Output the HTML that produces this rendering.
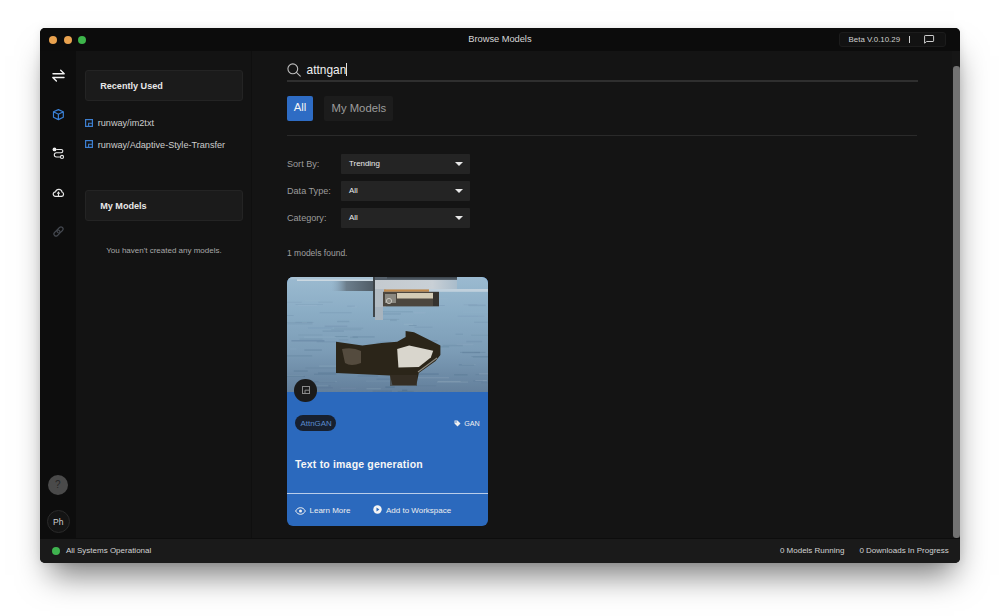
<!DOCTYPE html>
<html><head><meta charset="utf-8">
<style>
*{margin:0;padding:0;box-sizing:border-box}
html,body{width:1000px;height:616px;overflow:hidden;background:#fff;font-family:"Liberation Sans",sans-serif}
.a{position:absolute}
#win{position:absolute;left:40px;top:28px;width:920px;height:535px;border-radius:5px;background:#141414;overflow:hidden;
 box-shadow:1.5px 20px 30px -8px rgba(0,0,0,0.52),0 0 8px rgba(0,0,0,0.08)}
#title{left:0;top:0;width:920px;height:23px;background:#0c0c0c}
.dot{position:absolute;width:8.3px;height:8.3px;border-radius:50%;top:7.8px}
#side{left:0;top:23px;width:36px;height:487px;background:#0d0d0d}
#panel{left:36px;top:23px;width:176px;height:487px;background:#131313}
#main{left:212px;top:23px;width:708px;height:487px;background:#141414}
#foot{left:0;top:510px;width:920px;height:25px;background:#1a1a1a}
.t{position:absolute;white-space:nowrap;line-height:1}
.box{position:absolute;background:#1b1b1b;border:1px solid #242424;border-radius:3px}
.dd{position:absolute;left:89px;width:129px;height:19.8px;background:#242424;border-radius:1px}
.dd .arr{position:absolute;right:7px;top:7.5px;width:0;height:0;border-left:4.1px solid transparent;border-right:4.1px solid transparent;border-top:4.4px solid #e8e8e8}
.lbl{color:#9c9c9c;font-size:9.1px}
</style></head><body>
<div id="win">
  <div class="a" id="title">
    <div class="dot" style="left:9.2px;background:#e9a24f"></div>
    <div class="dot" style="left:23.5px;background:#e9a24f"></div>
    <div class="dot" style="left:38px;background:#3db54b"></div>
    <div class="t" style="left:428.3px;top:7.1px;font-size:9.35px;letter-spacing:-0.05px;color:#d6d6d6">Browse Models</div>
    <div class="a" style="left:799px;top:4px;width:107px;height:15px;background:#121212;border-radius:3px;border:1px solid #1c1c1c"></div>
    <div class="t" style="left:808.6px;top:7.6px;font-size:7.9px;color:#cfcfcf">Beta V.0.10.29</div>
    <div class="a" style="left:869px;top:8px;width:1px;height:7px;background:#cfcfcf"></div>
    <svg class="a" style="left:883px;top:6px" width="12" height="10" viewBox="0 0 12 10"><path d="M2.2 1.5h7.8q0.6 0 0.6 0.6v4.8q0 0.6-0.6 0.6h-6.4l-2 1.7v-7.1q0-0.6 0.6-0.6z" fill="none" stroke="#cdcdcd" stroke-width="1" stroke-linejoin="round"/></svg>
  </div>
  <div class="a" id="side">
    <svg class="a" style="left:12px;top:18px" width="13" height="13" viewBox="0 0 13 13"><path d="M1 4.7h11.2L8.7 1.3M12 8.5H0.8l3.6 3.4" fill="none" stroke="#f2f2f2" stroke-width="1.4" stroke-linecap="round" stroke-linejoin="round"/></svg>
    <svg class="a" style="left:12px;top:57px" width="13" height="13" viewBox="0 0 13 13"><path d="M6.4 1.6L11.3 3.8V9.2L6.4 11.6L1.5 9.2V3.8Z M1.5 3.8L6.4 6.2L11.3 3.8 M6.4 6.2V11.6" fill="none" stroke="#3a80d6" stroke-width="1.2" stroke-linejoin="round"/></svg>
    <svg class="a" style="left:12px;top:96px" width="13" height="13" viewBox="0 0 13 13"><circle cx="2.5" cy="2.4" r="1.9" fill="#f0f0f0"/><circle cx="10" cy="9.96" r="1.55" fill="none" stroke="#e8e8e8" stroke-width="1.1"/><path d="M4.2 2.5H9.2a1.62 1.62 0 0 1 0 3.24H4.4a2.11 2.11 0 0 0 0 4.22H8.4" fill="none" stroke="#e8e8e8" stroke-width="1.1"/></svg>
    <svg class="a" style="left:12px;top:135px" width="13" height="13" viewBox="0 0 13 13"><path d="M3.3 10.3H9.4A2.1 2.1 0 0 0 10.1 6.2A3.4 3.4 0 0 0 3.5 5.9A2.2 2.2 0 0 0 3.3 10.3Z" fill="none" stroke="#e6e6e6" stroke-width="1.2" stroke-linejoin="round"/><path d="M6.45 5.3L8.1 7.7H4.8Z" fill="#f5f5f5"/><path d="M6.45 7.5V10.2" stroke="#f5f5f5" stroke-width="1"/></svg>
    <svg class="a" style="left:12px;top:174px" width="13" height="13" viewBox="0 0 13 13"><g fill="none" stroke="#43474e" stroke-width="1.2" transform="rotate(-45 6.5 6.5)"><rect x="0.9" y="4.4" width="6.9" height="4.2" rx="2.1"/><rect x="5.2" y="4.4" width="6.9" height="4.2" rx="2.1"/></g></svg>
    <div class="a" style="left:8.3px;top:423.5px;width:20px;height:20px;border-radius:50%;background:#4a4a4a"></div>
    <div class="t" style="left:15px;top:428.5px;font-size:10px;color:#262626">?</div>
    <div class="a" style="left:6.8px;top:459px;width:23px;height:23px;border-radius:50%;background:#141414;border:1px solid #2a2a2a"></div>
    <div class="t" style="left:13px;top:467px;font-size:8.5px;color:#d0d0d0">Ph</div>
  </div>
  <div class="a" id="panel">
    <div class="box" style="left:9px;top:19px;width:158px;height:31px"></div>
    <div class="t" style="left:24.2px;top:30.6px;font-size:9.1px;font-weight:bold;color:#e8e8e8">Recently Used</div>
    <svg class="a" style="left:9px;top:68px" width="8" height="8" viewBox="0 0 8 8"><rect x="0.6" y="0.6" width="6.8" height="6.8" fill="none" stroke="#3d7fd0" stroke-width="1.2"/><path d="M3.6 7.4V4.3H7.4" fill="none" stroke="#3d7fd0" stroke-width="1.1"/></svg>
    <div class="t" style="left:21.7px;top:68.2px;font-size:9.15px;color:#cdcdcd">runway/im2txt</div>
    <svg class="a" style="left:9px;top:89px" width="8" height="8" viewBox="0 0 8 8"><rect x="0.6" y="0.6" width="6.8" height="6.8" fill="none" stroke="#3d7fd0" stroke-width="1.2"/><path d="M3.6 7.4V4.3H7.4" fill="none" stroke="#3d7fd0" stroke-width="1.1"/></svg>
    <div class="t" style="left:21.7px;top:89.5px;font-size:9.15px;color:#cdcdcd">runway/Adaptive-Style-Transfer</div>
    <div class="box" style="left:9px;top:139px;width:158px;height:31px"></div>
    <div class="t" style="left:24.2px;top:150.6px;font-size:9.1px;font-weight:bold;color:#e8e8e8">My Models</div>
    <div class="t" style="left:30.2px;top:195.5px;font-size:8px;color:#a8a8a8">You haven't created any models.</div>
  </div>
  <div class="a" style="left:211px;top:23px;width:1.5px;height:487px;background:#0f0f0f"></div>
  <div class="a" id="main">
    <svg class="a" style="left:34.8px;top:11.5px" width="15" height="14" viewBox="0 0 15 14"><circle cx="5.8" cy="5.8" r="4.9" fill="none" stroke="#bdbdbd" stroke-width="1.1"/><path d="M9.4 9.4L13.3 13.2" stroke="#bdbdbd" stroke-width="1.1" stroke-linecap="round"/></svg>
    <div class="t" style="left:54.6px;top:13.6px;font-size:11.9px;color:#f0f0f0">attngan</div>
    <div class="a" style="left:94px;top:11.5px;width:1.1px;height:13px;background:#e0e0e0"></div>
    <div class="a" style="left:35px;top:29.3px;width:631px;height:1.5px;background:#2f2f2f"></div>
    <div class="a" style="left:35px;top:45px;width:26px;height:25px;background:#2e6cc4;border-radius:2px"></div>
    <div class="t" style="left:41.7px;top:51.2px;font-size:11.3px;color:#f4f4f4">All</div>
    <div class="a" style="left:72.4px;top:45px;width:69px;height:25px;background:#1c1c1c;border-radius:2px"></div>
    <div class="t" style="left:79.5px;top:51.5px;font-size:11.3px;color:#9d9d9d">My Models</div>
    <div class="a" style="left:35px;top:84px;width:630px;height:1px;background:#2a2a2a"></div>
    <div class="t lbl" style="left:35px;top:108.5px">Sort By:</div>
    <div class="dd" style="top:103px"><div class="t" style="left:8px;top:6px;font-size:7.9px;color:#ececec">Trending</div><div class="arr"></div></div>
    <div class="t lbl" style="left:35px;top:135.5px">Data Type:</div>
    <div class="dd" style="top:130px"><div class="t" style="left:8px;top:6px;font-size:7.9px;color:#ececec">All</div><div class="arr"></div></div>
    <div class="t lbl" style="left:35px;top:162.5px">Category:</div>
    <div class="dd" style="top:157px"><div class="t" style="left:8px;top:6px;font-size:7.9px;color:#ececec">All</div><div class="arr"></div></div>
    <div class="t" style="left:35px;top:198px;font-size:8.5px;color:#a0a0a0">1 models found.</div>
    <div class="a" id="card" style="left:35px;top:226px;width:200.5px;height:249px;border-radius:6px;overflow:hidden;background:#2b69bd">
      <svg class="a" style="left:0;top:0" width="201" height="115" viewBox="0 0 201 115">
        <defs>
          <linearGradient id="wg" x1="0" y1="0" x2="0" y2="1"><stop offset="0" stop-color="#9bbad0"/><stop offset="0.3" stop-color="#8badc5"/><stop offset="0.65" stop-color="#7c9cb6"/><stop offset="1" stop-color="#637f9b"/></linearGradient>
          <linearGradient id="bandg" x1="0" y1="0" x2="1" y2="0"><stop offset="0" stop-color="#8aa6bb" stop-opacity="0"/><stop offset="0.35" stop-color="#6c7e8c"/><stop offset="1" stop-color="#4e5a64"/></linearGradient>
          <linearGradient id="blk" x1="0" y1="0" x2="1" y2="0"><stop offset="0" stop-color="#c4cacf"/><stop offset="0.7" stop-color="#c9d0d6"/><stop offset="1" stop-color="#a9bccb"/></linearGradient>
        </defs>
        <rect width="201" height="115" fill="url(#wg)"/>
        <g><rect x="20.9" y="50.4" width="24.5" height="1" fill="#36587a" opacity="0.08"/><rect x="176.5" y="74.8" width="11.4" height="1" fill="#c0d2e0" opacity="0.07"/><rect x="103.0" y="42.6" width="6.8" height="1.5" fill="#456684" opacity="0.14"/><rect x="184.3" y="79.0" width="22.3" height="1" fill="#456684" opacity="0.16"/><rect x="17.3" y="72.3" width="17.6" height="1.5" fill="#3c5d7c" opacity="0.18"/><rect x="27.0" y="96.7" width="22.4" height="1" fill="#3c5d7c" opacity="0.23"/><rect x="2.9" y="71.5" width="6.8" height="1" fill="#c0d2e0" opacity="0.09"/><rect x="179.3" y="63.8" width="15.8" height="1.5" fill="#456684" opacity="0.12"/><rect x="6.8" y="93.3" width="14.0" height="1.5" fill="#3c5d7c" opacity="0.20"/><rect x="114.8" y="62.2" width="7.2" height="1" fill="#456684" opacity="0.16"/><rect x="90.2" y="34.3" width="6.2" height="1" fill="#3c5d7c" opacity="0.14"/><rect x="111.8" y="85.4" width="22.4" height="1" fill="#36587a" opacity="0.18"/><rect x="126.2" y="64.6" width="6.8" height="1" fill="#c0d2e0" opacity="0.13"/><rect x="171.8" y="87.4" width="15.4" height="1" fill="#3c5d7c" opacity="0.27"/><rect x="91.2" y="77.4" width="11.5" height="1" fill="#456684" opacity="0.14"/><rect x="168.6" y="56.7" width="7.4" height="1" fill="#3c5d7c" opacity="0.14"/><rect x="167.1" y="97.0" width="13.4" height="1.5" fill="#3c5d7c" opacity="0.19"/><rect x="186.3" y="103.1" width="9.5" height="1.5" fill="#456684" opacity="0.15"/><rect x="89.4" y="41.9" width="22.7" height="1" fill="#36587a" opacity="0.10"/><rect x="65.7" y="59.4" width="22.0" height="1" fill="#36587a" opacity="0.22"/><rect x="149.9" y="104.6" width="31.2" height="1" fill="#c0d2e0" opacity="0.19"/><rect x="11.2" y="57.5" width="24.0" height="1" fill="#36587a" opacity="0.09"/><rect x="12.5" y="61.4" width="23.0" height="1.5" fill="#456684" opacity="0.10"/><rect x="64.5" y="29.5" width="5.8" height="1" fill="#c0d2e0" opacity="0.11"/><rect x="185.9" y="79.6" width="23.1" height="1" fill="#36587a" opacity="0.17"/><rect x="85.5" y="113.4" width="19.5" height="1.5" fill="#36587a" opacity="0.14"/><rect x="44.3" y="52.2" width="29.9" height="1" fill="#36587a" opacity="0.10"/><rect x="98.3" y="109.4" width="9.4" height="1.5" fill="#36587a" opacity="0.23"/><rect x="121.8" y="48.0" width="7.7" height="1" fill="#3c5d7c" opacity="0.18"/><rect x="35.7" y="53.4" width="21.2" height="1.5" fill="#456684" opacity="0.15"/><rect x="191.9" y="96.3" width="30.6" height="1.5" fill="#c0d2e0" opacity="0.18"/><rect x="31.0" y="95.5" width="19.8" height="1" fill="#36587a" opacity="0.24"/><rect x="29.7" y="64.4" width="23.2" height="1" fill="#3c5d7c" opacity="0.14"/><rect x="10.9" y="27.6" width="19.1" height="1.5" fill="#c0d2e0" opacity="0.07"/><rect x="115.1" y="112.6" width="5.1" height="1.5" fill="#3c5d7c" opacity="0.31"/><rect x="125.4" y="28.0" width="32.3" height="1" fill="#456684" opacity="0.14"/><rect x="79.0" y="103.6" width="24.1" height="1" fill="#c0d2e0" opacity="0.09"/><rect x="184.1" y="57.7" width="26.7" height="1" fill="#456684" opacity="0.10"/><rect x="175.5" y="34.2" width="29.2" height="1.5" fill="#c0d2e0" opacity="0.06"/><rect x="22.0" y="108.1" width="21.4" height="1.5" fill="#36587a" opacity="0.12"/><rect x="18.5" y="90.5" width="34.6" height="1" fill="#456684" opacity="0.14"/><rect x="50.1" y="43.7" width="12.2" height="1.5" fill="#3c5d7c" opacity="0.14"/><rect x="16.9" y="59.4" width="32.3" height="1.5" fill="#c0d2e0" opacity="0.09"/><rect x="175.4" y="74.8" width="17.6" height="1.5" fill="#456684" opacity="0.24"/><rect x="94.7" y="34.3" width="31.2" height="1" fill="#36587a" opacity="0.15"/><rect x="87.1" y="36.2" width="26.8" height="1.5" fill="#3c5d7c" opacity="0.13"/><rect x="103.9" y="68.7" width="28.5" height="1" fill="#36587a" opacity="0.10"/><rect x="-1.3" y="38.0" width="7.9" height="1" fill="#36587a" opacity="0.12"/><rect x="115.6" y="61.7" width="20.2" height="1" fill="#3c5d7c" opacity="0.16"/><rect x="155.5" y="67.8" width="20.2" height="1.5" fill="#3c5d7c" opacity="0.12"/><rect x="31.5" y="103.9" width="18.4" height="1" fill="#c0d2e0" opacity="0.14"/><rect x="127.6" y="49.7" width="17.9" height="1" fill="#3c5d7c" opacity="0.10"/><rect x="21.7" y="104.3" width="26.5" height="1" fill="#456684" opacity="0.24"/><rect x="188.3" y="103.0" width="11.6" height="1" fill="#c0d2e0" opacity="0.21"/><rect x="126.9" y="35.3" width="11.7" height="1" fill="#c0d2e0" opacity="0.10"/><rect x="63.1" y="59.6" width="7.8" height="1.5" fill="#3c5d7c" opacity="0.13"/><rect x="134.1" y="63.1" width="16.5" height="1.5" fill="#3c5d7c" opacity="0.16"/><rect x="13.1" y="110.3" width="32.6" height="1" fill="#36587a" opacity="0.16"/><rect x="-1.9" y="45.0" width="28.4" height="1" fill="#456684" opacity="0.11"/><rect x="128.6" y="99.9" width="33.4" height="1.5" fill="#c0d2e0" opacity="0.13"/><rect x="47.2" y="50.7" width="29.0" height="1" fill="#36587a" opacity="0.10"/><rect x="120.1" y="108.2" width="29.0" height="1" fill="#456684" opacity="0.13"/><rect x="14.9" y="44.9" width="5.3" height="1" fill="#c0d2e0" opacity="0.14"/><rect x="-1.1" y="78.4" width="26.3" height="1" fill="#456684" opacity="0.25"/><rect x="31.4" y="24.7" width="14.4" height="1" fill="#456684" opacity="0.09"/><rect x="127.8" y="61.9" width="13.1" height="1" fill="#3c5d7c" opacity="0.20"/><rect x="140.3" y="21.4" width="21.5" height="1" fill="#c0d2e0" opacity="0.05"/><rect x="11.8" y="107.9" width="29.6" height="1.5" fill="#c0d2e0" opacity="0.14"/><rect x="70.6" y="98.5" width="20.2" height="1" fill="#456684" opacity="0.24"/><rect x="170.8" y="38.7" width="26.9" height="1" fill="#3c5d7c" opacity="0.08"/><rect x="-7.1" y="98.7" width="23.8" height="1" fill="#c0d2e0" opacity="0.19"/><rect x="126.4" y="25.2" width="16.4" height="1.5" fill="#3c5d7c" opacity="0.11"/><rect x="50.1" y="42.8" width="18.8" height="1" fill="#c0d2e0" opacity="0.06"/><rect x="187.2" y="44.7" width="34.2" height="1" fill="#456684" opacity="0.14"/><rect x="53.5" y="110.8" width="15.7" height="1" fill="#c0d2e0" opacity="0.08"/><rect x="93.1" y="64.6" width="11.0" height="1" fill="#36587a" opacity="0.16"/><rect x="8.4" y="44.8" width="17.0" height="1" fill="#36587a" opacity="0.08"/><rect x="37.7" y="48.6" width="22.6" height="1.5" fill="#456684" opacity="0.14"/><rect x="150.7" y="103.9" width="22.9" height="1" fill="#c0d2e0" opacity="0.18"/><rect x="116.8" y="46.7" width="9.3" height="1.5" fill="#c0d2e0" opacity="0.12"/><rect x="93.6" y="85.9" width="32.3" height="1.5" fill="#36587a" opacity="0.23"/><rect x="173.0" y="74.9" width="25.5" height="1" fill="#456684" opacity="0.20"/><rect x="17.3" y="22.9" width="15.8" height="1.5" fill="#c0d2e0" opacity="0.05"/><rect x="-6.1" y="24.8" width="20.9" height="1" fill="#3c5d7c" opacity="0.08"/><rect x="4.4" y="63.0" width="33.0" height="1.5" fill="#36587a" opacity="0.22"/><rect x="142.9" y="69.4" width="19.2" height="1" fill="#3c5d7c" opacity="0.21"/><rect x="32.1" y="88.6" width="27.2" height="1" fill="#c0d2e0" opacity="0.19"/><rect x="176.6" y="27.2" width="13.6" height="1" fill="#456684" opacity="0.06"/><rect x="58.0" y="76.4" width="24.5" height="1" fill="#456684" opacity="0.21"/><rect x="89.6" y="65.3" width="34.2" height="1.5" fill="#456684" opacity="0.10"/><rect x="135.3" y="66.0" width="13.6" height="1.5" fill="#36587a" opacity="0.16"/><rect x="190.5" y="38.7" width="33.1" height="1" fill="#c0d2e0" opacity="0.05"/><rect x="188.5" y="97.1" width="18.5" height="1" fill="#456684" opacity="0.16"/><rect x="8.5" y="27.0" width="27.4" height="1" fill="#3c5d7c" opacity="0.09"/><rect x="119.5" y="76.7" width="13.4" height="1" fill="#3c5d7c" opacity="0.11"/><rect x="169.6" y="66.8" width="16.8" height="1.5" fill="#c0d2e0" opacity="0.08"/><rect x="51.9" y="62.4" width="9.2" height="1" fill="#3c5d7c" opacity="0.13"/><rect x="-9.6" y="99.0" width="27.5" height="1" fill="#36587a" opacity="0.27"/><rect x="174.8" y="87.0" width="13.7" height="1" fill="#c0d2e0" opacity="0.12"/><rect x="110.8" y="113.9" width="15.8" height="1" fill="#3c5d7c" opacity="0.21"/><rect x="0.6" y="46.4" width="24.9" height="1" fill="#456684" opacity="0.15"/><rect x="79.4" y="111.3" width="14.5" height="1" fill="#c0d2e0" opacity="0.19"/><rect x="119.3" y="96.3" width="32.4" height="1.5" fill="#456684" opacity="0.28"/><rect x="181.4" y="27.6" width="17.3" height="1.5" fill="#456684" opacity="0.12"/><rect x="89.5" y="101.7" width="32.4" height="1" fill="#456684" opacity="0.22"/><rect x="47.8" y="59.0" width="12.7" height="1" fill="#3c5d7c" opacity="0.19"/><rect x="51.7" y="81.7" width="21.7" height="1.5" fill="#456684" opacity="0.16"/><rect x="32.6" y="35.2" width="32.2" height="1" fill="#456684" opacity="0.12"/><rect x="194.3" y="105.2" width="18.5" height="1" fill="#456684" opacity="0.14"/><rect x="60.1" y="28.5" width="7.7" height="1.5" fill="#3c5d7c" opacity="0.08"/></g>
        <rect x="0" y="0" width="88" height="2.4" fill="#a9c2d4"/><rect x="10" y="2.4" width="78" height="1.6" fill="#d4dde4" opacity="0.85"/>
        <rect x="44" y="4" width="44" height="10" fill="url(#bandg)"/>
        <rect x="88" y="0" width="82" height="3" fill="#56616b"/>
        <rect x="88" y="3" width="82" height="9" fill="url(#blk)"/>
        <rect x="100" y="0" width="70" height="1.5" fill="#3f4850"/>
        <rect x="88" y="12" width="113" height="2.8" fill="#c0d0dc"/>
        <rect x="86" y="0" width="2" height="40" fill="#3e4448"/>
        <rect x="88" y="12" width="11" height="18" fill="#b3bcc3"/>
        <rect x="88" y="30" width="8" height="13" fill="#a8b4be"/>
        <rect x="97" y="12.4" width="45" height="2.4" fill="#c08a4c"/>
        <rect x="96" y="14.8" width="56" height="14.6" fill="#4c473f"/>
        <rect x="98" y="17" width="11" height="9" fill="#8a8880"/>
        <circle cx="102" cy="24" r="2.6" fill="none" stroke="#c8c6be" stroke-width="1"/>
        <rect x="110" y="16" width="37" height="5.5" fill="#d4ccb6"/>
        <rect x="146" y="15" width="6" height="14" fill="#35332f"/>
        <path d="M49 64.8L75.4 68.4L94.6 66L110.2 64.8L118.6 60L118.6 54L127 55.2L139 61.2L153.4 68.4L153.4 78L148.6 84L131.8 96L129.4 108L105.4 108L103 98.4L49 96Z" fill="#2b2519"/>
        <path d="M55 72Q66 70 74 74L74 86Q64 90 58 86Z" fill="#5f5547" opacity="0.8"/>
        <path d="M110.2 72L122.2 68.4L146.2 73.8L143.8 80.4L131.8 90L111.4 90.6Z" fill="#d9d6cd"/>
        <path d="M131 95L150 81" stroke="#8d8a80" stroke-width="1.2"/>
        <rect x="103" y="98" width="27" height="11" fill="#3a342a" opacity="0.6"/>
      </svg>
      <div class="a" style="left:7px;top:102px;width:22.5px;height:22.5px;border-radius:50%;background:#1b1b1b"></div>
      <svg class="a" style="left:14.5px;top:109px" width="8" height="8" viewBox="0 0 8 8"><rect x="0.5" y="0.5" width="7" height="7" fill="none" stroke="#8a8a8a" stroke-width="1"/><path d="M3 7V4.2H7" fill="none" stroke="#8a8a8a" stroke-width="1"/></svg>
      <div class="a" style="left:8px;top:138px;width:41px;height:16px;border-radius:8px;background:#172030"></div>
      <div class="t" style="left:13.5px;top:142.5px;font-size:7.9px;color:#5b8bcd">AttnGAN</div>
      <svg class="a" style="left:167px;top:143px" width="7" height="7" viewBox="0 0 7 7"><path d="M0.5 0.5H3.5L6.5 3.5L3.5 6.5L0.5 3.5Z" fill="#f0f0f0"/><circle cx="2" cy="2" r="0.7" fill="#2b69bd"/></svg>
      <div class="t" style="left:177.2px;top:143.2px;font-size:7.2px;color:#f0f0f0">GAN</div>
      <div class="t" style="left:8px;top:182.4px;font-size:10.5px;font-weight:bold;color:#f6f6f6;letter-spacing:0.18px">Text to image generation</div>
      <div class="a" style="left:0;top:215.5px;width:201px;height:1.2px;background:#b9cdea"></div>
      <svg class="a" style="left:7.5px;top:229.5px" width="11" height="8" viewBox="0 0 11 8"><path d="M0.6 4C2 1.6 3.6 0.7 5.5 0.7S9 1.6 10.4 4C9 6.4 7.4 7.3 5.5 7.3S2 6.4 0.6 4Z" fill="none" stroke="#f0f0f0" stroke-width="1"/><circle cx="5.5" cy="4" r="1.5" fill="#f0f0f0"/></svg>
      <div class="t" style="left:22.5px;top:229.6px;font-size:8px;color:#eeeeee">Learn More</div>
      <svg class="a" style="left:86px;top:228.3px" width="9" height="9" viewBox="0 0 9 9"><circle cx="4.5" cy="4.5" r="4.2" fill="#f4f4f4"/><path d="M3.5 2.6L6.4 4.5L3.5 6.4Z" fill="#2b69bd"/></svg>
      <div class="t" style="left:99px;top:229.6px;font-size:8px;color:#eeeeee">Add to Workspace</div>
    </div>
    <div class="a" style="left:700px;top:0;width:8px;height:487px;background:#161616"></div>
    <div class="a" style="left:701px;top:14.6px;width:6.5px;height:472.4px;border-radius:3.2px;background:#727272"></div>
  </div>
  <div class="a" id="foot">
    <div class="a" style="left:0;top:-0.5px;width:920px;height:1.3px;background:#0d0d0d"></div>
    <div class="a" style="left:11.5px;top:9px;width:8px;height:8px;border-radius:50%;background:#3fb34f"></div>
    <div class="t" style="left:25.9px;top:9.2px;font-size:8px;color:#d2d2d2">All Systems Operational</div>
    <div class="t" style="left:739.9px;top:9.2px;font-size:8px;color:#d2d2d2">0 Models Running</div>
    <div class="t" style="left:819.4px;top:9.2px;font-size:8px;color:#d2d2d2">0 Downloads In Progress</div>
  </div>
</div>
</body></html>
